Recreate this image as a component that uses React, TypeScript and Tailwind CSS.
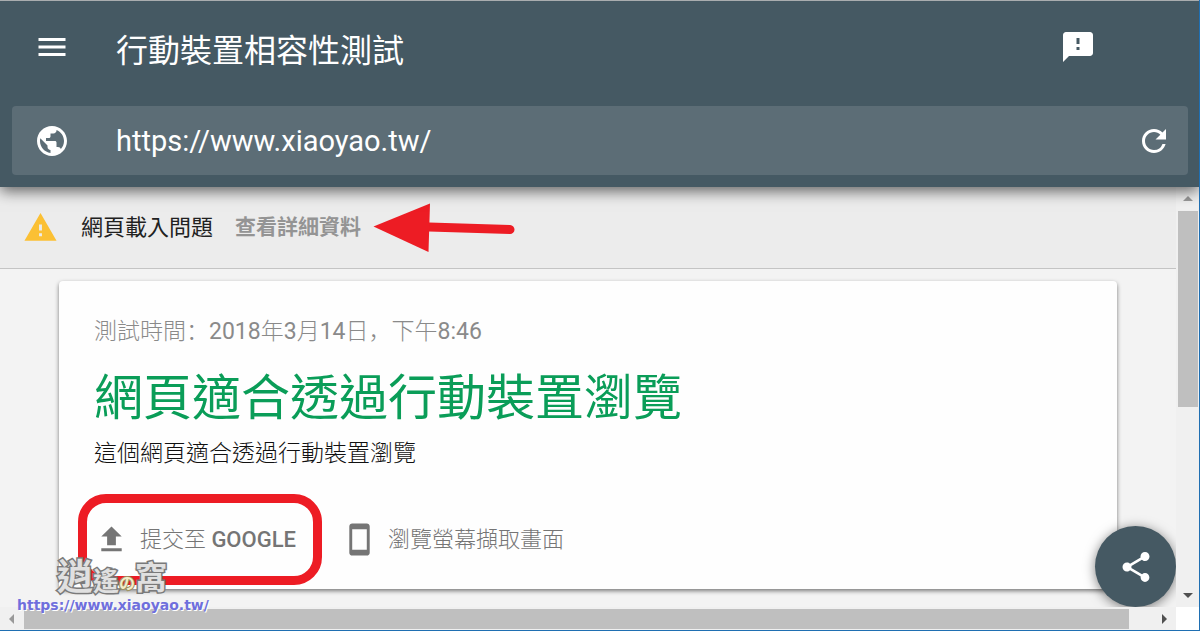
import {
  MdArrowDropDown,
  MdFeedback,
  MdMenu,
  MdPublic,
  MdRefresh,
  MdShare,
  MdStayCurrentPortrait,
  MdUpload,
  MdWarning,
} from 'react-icons/md';

function Header() {
  return (
    <header className="relative z-10 shrink-0 border-t border-[#a9adaf] bg-[#455963] pr-[11px] pb-3 pl-3 text-white shadow-[0_4px_14px_rgba(0,0,0,0.6)]">
      <div className="flex h-[105px] items-start pt-7 pr-[92px] pl-[22px]">
        <button aria-label="選單">
          <MdMenu size={36} />
        </button>
        <h1 className="ml-[46px] flex-1 text-[32px] leading-[44px]">行動裝置相容性測試</h1>
        <button aria-label="意見回饋">
          <MdFeedback size={36} />
        </button>
      </div>
      <form className="flex h-[69px] items-center rounded-sm bg-[#5c6d76] pr-4 pl-[22px]">
        <MdPublic size={36} className="shrink-0" />
        <input
          type="text"
          aria-label="網址"
          defaultValue="https://www.xiaoyao.tw/"
          className="ml-[46px] min-w-0 flex-1 bg-transparent pt-0.5 text-[29px] outline-none"
        />
        <button type="button" aria-label="重新測試">
          <MdRefresh size={36} />
        </button>
      </form>
    </header>
  );
}

function StatusBar() {
  return (
    <div className="relative flex h-[82px] items-center border-b border-[#c4c4c4] bg-[#ececec] pl-[23px]">
      <MdWarning size={35} className="text-[#fbc034]" />
      <span className="ml-[23px] text-[22px] text-[#212121]">網頁載入問題</span>
      <a href="#details" className="ml-[22px] text-[21px] font-bold text-[#949494]">
        查看詳細資料
      </a>
      {/* hand-drawn pointer */}
      <svg viewBox="0 0 142 50" className="absolute top-4 left-[373px] w-[142px]" aria-hidden="true">
        <path d="M56 24L137 26.500" stroke="#ed1c24" strokeWidth="9" strokeLinecap="round" />
        <path d="M0.500 23.500L57 0.500L55.500 49Z" fill="#ed1c24" />
      </svg>
    </div>
  );
}

function Watermark() {
  return (
    <div className="absolute bottom-4 left-[17px] z-20 font-['Liberation_Sans','Noto_Sans_CJK_TC',sans-serif] font-bold">
      <div className="ml-10 flex items-end leading-none text-[#e0e0e0] [paint-order:stroke] [-webkit-text-stroke:3px_#7a7a7a]">
        <span className="text-[36px] leading-9">逍</span>
        <span className="text-[26px] leading-7">遙</span>
        <span className="text-[16px] leading-6 text-[#f3ecc8] [-webkit-text-stroke:2px_#9b8e60]">の</span>
        <span className="text-[32px] leading-9">窩</span>
      </div>
      <div className="font-['DejaVu_Sans',sans-serif] text-[14px] leading-[18px] text-[#6f6fdc] [text-shadow:1px_1px_0_#fff]">
        https://www.xiaoyao.tw/
      </div>
    </div>
  );
}

function ResultCard() {
  return (
    <section className="mx-[59px] mt-3 rounded-sm bg-[#fefefe] px-[35px] pt-[33px] pb-[30px] shadow-[0_2px_4px_rgba(0,0,0,0.5)]">
      <p className="font-[Roboto,'Noto_Sans_CJK_SC',sans-serif] text-[23px] leading-9 font-light text-[#8a8a8a]">
        測試時間：<span className="font-normal">2018</span>年<span className="font-normal">3</span>月
        <span className="font-normal">14</span>日，下午<span className="font-normal">8:46</span>
      </p>
      <h2 className="mt-3 text-[49px] leading-[74px] text-[#0a9d58]">網頁適合透過行動裝置瀏覽</h2>
      <p className="text-[23px] leading-9 font-light text-[#111]">這個網頁適合透過行動裝置瀏覽</p>
      <div className="mt-[47px] flex h-10 items-center text-[22px] text-[#757575]">
        <button className="relative flex items-center">
          <MdUpload size={35} />
          <span className="ml-[11px] font-light">
            提交至 <span className="font-medium">GOOGLE</span>
          </span>
          {/* red highlight around the submit button */}
          <span className="absolute -top-7 -right-[26px] -bottom-7 -left-4 rounded-[28px] border-[9px] border-[#ed1c24]" />
        </button>
        <button className="ml-[46px] flex items-center">
          <MdStayCurrentPortrait size={35} />
          <span className="ml-[11px] font-light">瀏覽螢幕擷取畫面</span>
        </button>
      </div>
    </section>
  );
}

export default function App() {
  return (
    <div className="relative flex h-screen flex-col overflow-hidden border-r border-b border-[#1f6fb2] bg-[#f3f3f3] font-[Roboto,'Noto_Sans_CJK_TC',sans-serif]">
      <Header />
      <div className="flex min-h-0 flex-1">
        <main className="relative min-w-0 flex-1 overflow-hidden">
          <StatusBar />
          <ResultCard />
          <button
            aria-label="分享"
            className="absolute right-0 bottom-0 flex size-[81px] items-center justify-center rounded-full bg-[#455963] text-white shadow-[0_2px_12px_rgba(0,0,0,0.5)]"
          >
            <MdShare size={36} />
          </button>
        </main>
        {/* vertical scroll bar */}
        <div className="flex w-[23px] flex-col items-center bg-[#f0f0f0]">
          <MdArrowDropDown size={24} className="shrink-0 rotate-180 text-[#999]" />
          <div className="h-[196px] w-5 bg-[#bfbfbf]" />
          <MdArrowDropDown size={24} className="mt-auto shrink-0 text-[#505050]" />
        </div>
      </div>
      {/* horizontal scroll bar */}
      <div className="flex h-[23px] shrink-0 items-center bg-[#f0f0f0]">
        <MdArrowDropDown size={24} className="shrink-0 rotate-90 text-[#999]" />
        <div className="h-5 flex-1 bg-[#bfbfbf]" />
        <div className="flex w-[47px] justify-end">
          <MdArrowDropDown size={24} className="-rotate-90 text-[#505050]" />
        </div>
        <div className="h-full w-[23px] bg-white" />
      </div>
      <Watermark />
    </div>
  );
}
